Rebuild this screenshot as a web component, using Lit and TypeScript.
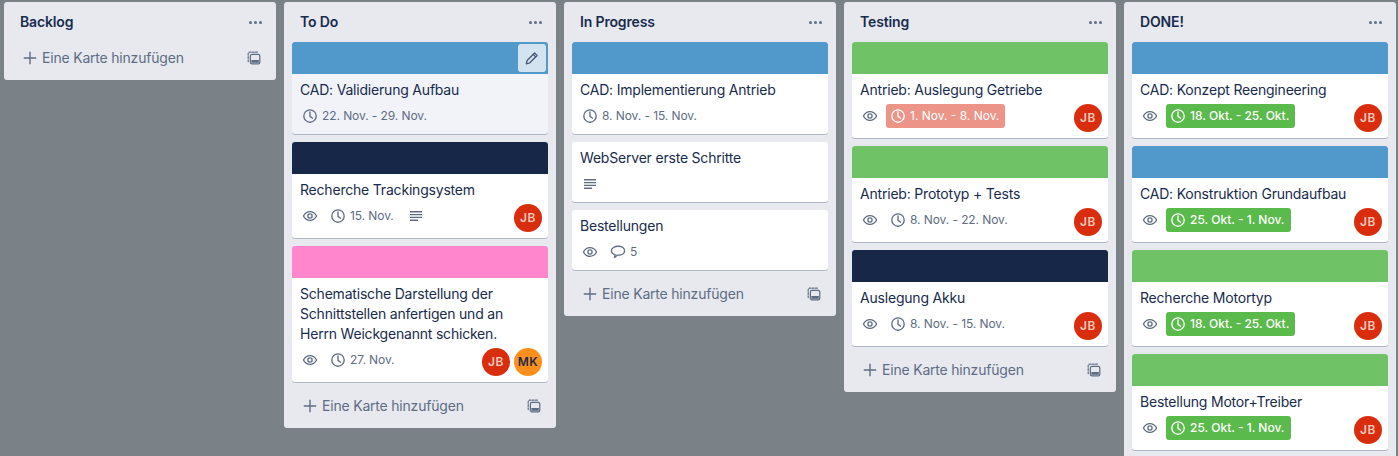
import { LitElement, html, css, svg, nothing } from 'lit';
import { customElement } from 'lit/decorators.js';

type Cover = 'blue' | 'navy' | 'pink' | 'green';
type Badge =
  | { kind: 'eye' }
  | { kind: 'desc' }
  | { kind: 'date'; text: string; tone?: 'red' | 'ok' }
  | { kind: 'comments'; text: string };

interface Card {
  title: string;
  cover?: Cover;
  badges: Badge[];
  members?: string[];
  hover?: boolean;
}

interface List {
  name: string;
  cards: Card[];
  footer?: boolean;
}

const eye: Badge = { kind: 'eye' };
const desc: Badge = { kind: 'desc' };
const date = (text: string, tone?: 'red' | 'ok'): Badge => ({ kind: 'date', text, tone });

const LISTS: List[] = [
  { name: 'Backlog', cards: [], footer: true },
  {
    name: 'To Do',
    footer: true,
    cards: [
      { title: 'CAD: Validierung Aufbau', cover: 'blue', hover: true, badges: [date('22. Nov. - 29. Nov.')] },
      { title: 'Recherche Trackingsystem', cover: 'navy', badges: [eye, date('15. Nov.'), desc], members: ['JB'] },
      {
        title: 'Schematische Darstellung der Schnittstellen anfertigen und an Herrn Weickgenannt schicken.',
        cover: 'pink',
        badges: [eye, date('27. Nov.')],
        members: ['JB', 'MK'],
      },
    ],
  },
  {
    name: 'In Progress',
    footer: true,
    cards: [
      { title: 'CAD: Implementierung Antrieb', cover: 'blue', badges: [date('8. Nov. - 15. Nov.')] },
      { title: 'WebServer erste Schritte', badges: [desc] },
      { title: 'Bestellungen', badges: [eye, { kind: 'comments', text: '5' }] },
    ],
  },
  {
    name: 'Testing',
    footer: true,
    cards: [
      { title: 'Antrieb: Auslegung Getriebe', cover: 'green', badges: [eye, date('1. Nov. - 8. Nov.', 'red')], members: ['JB'] },
      { title: 'Antrieb: Prototyp + Tests', cover: 'green', badges: [eye, date('8. Nov. - 22. Nov.')], members: ['JB'] },
      { title: 'Auslegung Akku', cover: 'navy', badges: [eye, date('8. Nov. - 15. Nov.')], members: ['JB'] },
    ],
  },
  {
    name: 'DONE!',
    cards: [
      { title: 'CAD: Konzept Reengineering', cover: 'blue', badges: [eye, date('18. Okt. - 25. Okt.', 'ok')], members: ['JB'] },
      { title: 'CAD: Konstruktion Grundaufbau', cover: 'blue', badges: [eye, date('25. Okt. - 1. Nov.', 'ok')], members: ['JB'] },
      { title: 'Recherche Motortyp', cover: 'green', badges: [eye, date('18. Okt. - 25. Okt.', 'ok')], members: ['JB'] },
      { title: 'Bestellung Motor+Treiber', cover: 'green', badges: [eye, date('25. Okt. - 1. Nov.', 'ok')], members: ['JB'] },
    ],
  },
];

const icon = (body: unknown, size = 20) => html`<svg
  class="icon"
  width=${size}
  height=${size}
  viewBox="0 0 20 20"
  fill="none"
  stroke="currentColor"
  stroke-width="1.35"
  stroke-linecap="round"
  stroke-linejoin="round"
>${body}</svg>`;

const clockIcon = () => icon(svg`<circle cx="10" cy="10" r="6.2" /><path d="M10 6v4.4l2.6 1.8" />`);
const eyeIcon = () =>
  icon(svg`<path d="M3.4 10c1.6-3 3.9-4.4 6.6-4.4s5 1.4 6.6 4.4c-1.6 3-3.9 4.4-6.6 4.4s-5-1.4-6.6-4.4z" /><circle cx="10" cy="10" r="2.1" />`);
const descIcon = () =>
  icon(svg`<path stroke-linecap="butt" stroke-width="1.4" d="M4 5.8h12M4 8.6h12M4 11.4h12M4 14.2h8" />`);
const commentIcon = () =>
  icon(svg`<path d="M10.2 4.2c3.6 0 6.4 1.9 6.4 4.5s-2.8 4.4-6 4.4H9.4L6.6 15.6l.4-3C4.9 12 3.4 10.6 3.4 8.7c0-2.6 3.2-4.5 6.8-4.5z" />`);
const pencilIcon = () =>
  icon(svg`<path stroke-width="1.2" d="M12.6 5l2.5 2.5-7.5 7.5-3.3.8.8-3.3z" /><path stroke-width="1.2" d="M11.2 6.4l2.5 2.5" />`);
const plusIcon = () =>
  icon(svg`<path stroke-width="1.4" stroke-linecap="butt" d="M10 3.8v12.4M3.8 10h12.4" />`);
const templateIcon = () =>
  icon(svg`<rect x="6.4" y="6.4" width="9.4" height="9.4" rx="1.6" stroke-width="1.2" />
    <path stroke-width="1.2" d="M4.2 13.6V5.8c0-.9.7-1.6 1.6-1.6h7.8" stroke-dasharray="1.8 1.4" />
    <rect x="7.4" y="12" width="7.4" height="2.8" fill="currentColor" stroke="none" />`);

@customElement('app-root')
export class AppRoot extends LitElement {
  static override styles = css`
    :host {
      display: block;
      width: 1398px;
      height: 456px;
      overflow: hidden;
      background: #7a8288;
      font-family: Inter, 'Liberation Sans', sans-serif;
      font-size: 14px;
      line-height: 20px;
      letter-spacing: -0.2px;
      color: #172b4d;
    }
    .board {
      display: flex;
      align-items: flex-start;
      gap: 8px;
      padding: 2px 4px 0;
    }
    .list {
      flex: none;
      box-sizing: border-box;
      width: 272px;
      padding: 0 8px 6px;
      background: #e7e9ef;
      border-radius: 3px;
    }
    .list-head {
      display: flex;
      align-items: center;
      justify-content: space-between;
      height: 40px;
      padding: 0 6px 0 8px;
      font-weight: 600;
      letter-spacing: -0.15px;
    }
    .dots {
      display: flex;
      gap: 2px;
    }
    .dots i {
      width: 3px;
      height: 3px;
      border-radius: 50%;
      background: #5e6c84;
    }
    .card {
      position: relative;
      margin-bottom: 8px;
      background: #fff;
      border-radius: 3px;
      box-shadow: 0 1px 0 rgba(9, 30, 66, 0.25);
      overflow: hidden;
    }
    .card.hover {
      background: #f2f3f8;
    }
    .cover {
      height: 32px;
    }
    .cover.blue {
      background: #5299cb;
    }
    .cover.navy {
      background: #172748;
    }
    .cover.pink {
      background: #ff85cc;
    }
    .cover.green {
      background: #70c266;
    }
    .edit {
      position: absolute;
      top: 2px;
      right: 2px;
      display: flex;
      align-items: center;
      justify-content: center;
      width: 28px;
      height: 28px;
      border-radius: 3px;
      background: rgba(244, 245, 247, 0.8);
      color: #42526e;
    }
    .body {
      padding: 6px 6px 6px 8px;
    }
    .title {
      margin-bottom: 4px;
    }
    .meta {
      display: flex;
      align-items: flex-start;
      justify-content: space-between;
      margin-left: -2px;
    }
    .badges {
      display: flex;
      align-items: flex-start;
    }
    .badge {
      display: flex;
      align-items: center;
      height: 24px;
      box-sizing: border-box;
      margin-right: 4px;
      padding: 2px;
      border-radius: 3px;
      font-size: 12px;
      letter-spacing: -0.08px;
      color: #5e6c84;
    }
    .badge.has-text {
      padding-right: 6px;
    }
    .badge span {
      margin-left: 2px;
    }
    .badge.red {
      background: #ec9488;
      color: #fff;
      letter-spacing: 0;
    }
    .badge.ok {
      background: #5aba4b;
      color: #fff;
      font-weight: 500;
      letter-spacing: 0;
    }
    .icon {
      display: block;
      flex: none;
    }
    .members {
      display: flex;
      gap: 4px;
    }
    .avatar {
      display: flex;
      align-items: center;
      justify-content: center;
      width: 28px;
      height: 28px;
      border-radius: 50%;
      font-size: 12px;
      font-weight: 600;
      letter-spacing: 0.5px;
      background: #d92d0e;
      color: #f8cbbf;
    }
    .avatar.mk {
      background: #ff8f1c;
      color: #172b4d;
    }
    .add {
      display: flex;
      align-items: center;
      justify-content: space-between;
      height: 32px;
      padding: 0 4px 0 8px;
      color: #5e6c84;
    }
    .add-left {
      display: flex;
      align-items: center;
    }
    .add-left span {
      margin-left: 2px;
    }
  `;

  private renderBadge(b: Badge) {
    switch (b.kind) {
      case 'eye':
        return html`<div class="badge">${eyeIcon()}</div>`;
      case 'desc':
        return html`<div class="badge">${descIcon()}</div>`;
      case 'comments':
        return html`<div class="badge has-text">${commentIcon()}<span>${b.text}</span></div>`;
      case 'date':
        return html`<div class="badge has-text ${b.tone ?? ''}">${clockIcon()}<span>${b.text}</span></div>`;
    }
  }

  private renderCard(c: Card) {
    return html`<div class="card ${c.hover ? 'hover' : ''}">
      ${c.cover ? html`<div class="cover ${c.cover}"></div>` : nothing}
      ${c.hover ? html`<div class="edit">${pencilIcon()}</div>` : nothing}
      <div class="body">
        <div class="title">${c.title}</div>
        <div class="meta">
          <div class="badges">${c.badges.map((b) => this.renderBadge(b))}</div>
          ${c.members
            ? html`<div class="members">
                ${c.members.map((m) => html`<div class="avatar ${m.toLowerCase()}">${m}</div>`)}
              </div>`
            : nothing}
        </div>
      </div>
    </div>`;
  }

  override render() {
    return html`<div class="board">
      ${LISTS.map(
        (l) => html`<section class="list">
          <div class="list-head">
            <span>${l.name}</span>
            <div class="dots"><i></i><i></i><i></i></div>
          </div>
          ${l.cards.map((c) => this.renderCard(c))}
          ${l.footer
            ? html`<div class="add">
                <div class="add-left">${plusIcon()}<span>Eine Karte hinzufügen</span></div>
                ${templateIcon()}
              </div>`
            : nothing}
        </section>`
      )}
    </div>`;
  }
}
